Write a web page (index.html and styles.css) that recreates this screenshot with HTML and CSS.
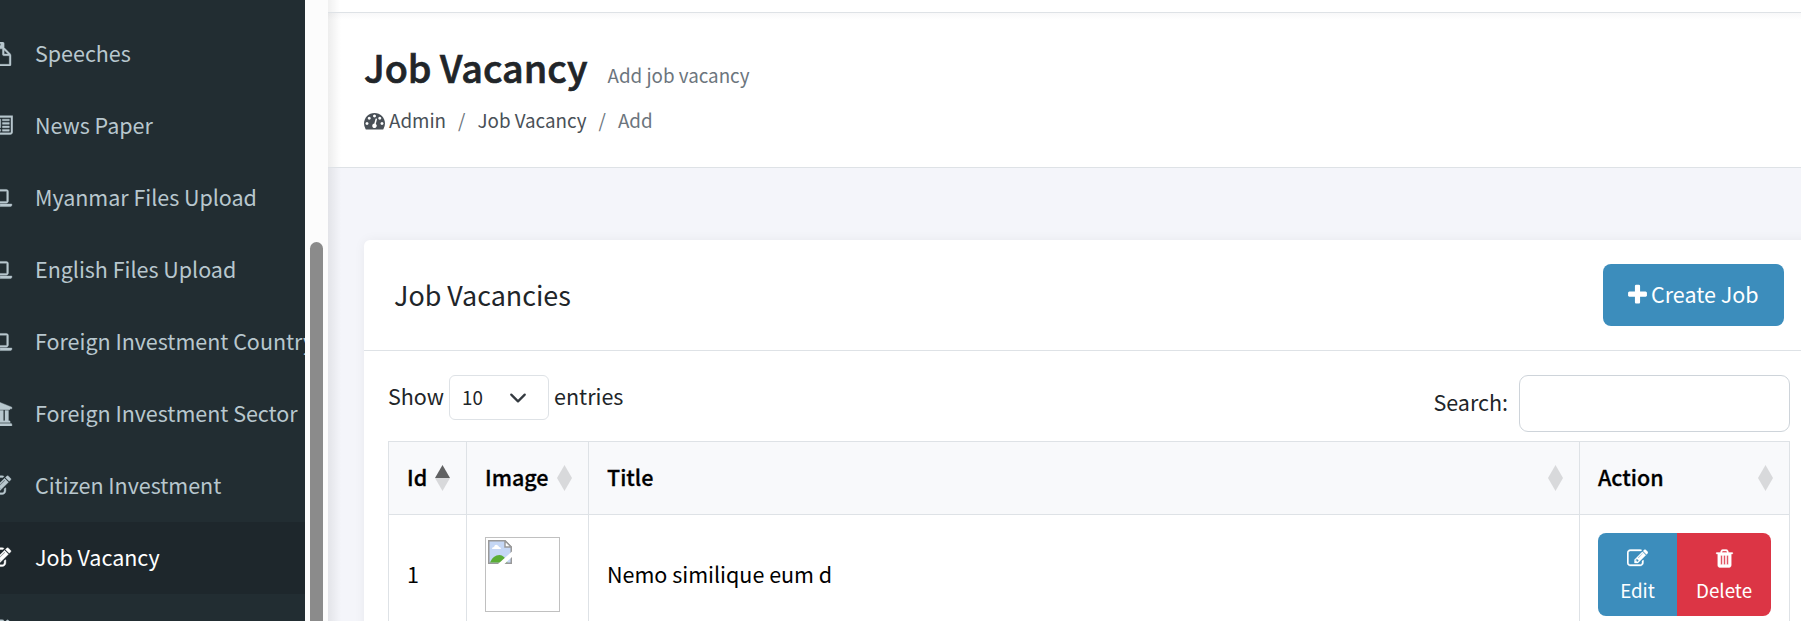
FILE: index.html
```html
<!DOCTYPE html>
<html lang="en">
<head>
    <meta charset="UTF-8">
    <meta name="viewport" content="width=device-width, initial-scale=1.0">
    <title>Job Vacancy</title>
    <link rel="stylesheet" href="styles.css">
</head>
<body>
    <!-- icon sprite -->
    <svg class="sprite">
        <symbol id="i-paste" viewBox="0 0 1792 1792"><path d="M768 1664h896v-640h-416q-40 0-68-28t-28-68v-416h-384v1152zm256-1440v-64q0-13-9.500-22.500t-22.500-9.500h-704q-13 0-22.500 9.500t-9.500 22.500v64q0 13 9.500 22.500t22.500 9.500h704q13 0 22.500-9.500t9.500-22.500zm256 672h299l-299-299v299zm512 128v672q0 40-28 68t-68 28h-960q-40 0-68-28t-28-68v-160h-544q-40 0-68-28t-28-68v-1344q0-40 28-68t68-28h1088q40 0 68 28t28 68v328q21 13 36 28l408 408q28 28 48 76t20 88z"/></symbol>
        <symbol id="i-news" viewBox="0 0 2048 1792"><path d="M1024 512h-384v384h384v-384zm128 640v128h-640v-128h640zm0-768v640h-640v-640h640zm640 768v128h-512v-128h512zm0-256v128h-512v-128h512zm0-256v128h-512v-128h512zm0-256v128h-512v-128h512zm-1536 960v-960h-128v960q0 26 19 45t45 19 45-19 19-45zm1664 0v-1088h-1536v1088q0 33-11 64h1483q26 0 45-19t19-45zm128-1216v1216q0 80-56 136t-136 56h-1664q-80 0-136-56t-56-136v-1088h256v-128h1792z"/></symbol>
        <symbol id="i-laptop" viewBox="0 0 1920 1792"><path d="M416 1280q-66 0-113-47t-47-113v-704q0-66 47-113t113-47h1088q66 0 113 47t47 113v704q0 66-47 113t-113 47h-1088zm-32-864v704q0 13 9.500 22.500t22.500 9.500h1088q13 0 22.500-9.500t9.500-22.500v-704q0-13-9.500-22.500t-22.500-9.500h-1088q-13 0-22.500 9.500t-9.500 22.500zm1376 928h160v96q0 40-47 68t-113 28h-1600q-66 0-113-28t-47-68v-96h1760zm-720 96q16 0 16-16t-16-16h-160q-16 0-16 16t16 16h160z"/></symbol>
        <symbol id="i-bank" viewBox="0 0 1920 1792"><path d="M960 0l960 384v128h-128q0 26-20.500 45t-48.500 19h-1526q-28 0-48.500-19t-20.500-45h-128v-128zm-704 640h256v768h128v-768h256v768h128v-768h256v768h128v-768h256v768h59q28 0 48.500 19t20.500 45v64h-1664v-64q0-26 20.500-45t48.500-19h59v-768zm1595 960q28 0 48.500 19t20.500 45v128h-1920v-128q0-26 20.500-45t48.500-19h1782z"/></symbol>
        <symbol id="i-edit" viewBox="0 0 1792 1792"><path d="M888 1184l116-116-152-152-116 116v56h96v96h56zm440-720q-16-16-33 1l-350 350q-17 17-1 33t33-1l350-350q17-17 1-33zm80 594v190q0 119-84.500 203.500t-203.500 84.500h-832q-119 0-203.500-84.500t-84.500-203.500v-832q0-119 84.500-203.500t203.500-84.500h832q63 0 117 25 15 7 18 23 3 17-9 29l-49 49q-14 14-32 8-23-6-45-6h-832q-66 0-113 47t-47 113v832q0 66 47 113t113 47h832q66 0 113-47t47-113v-126q0-13 9-22l64-64q15-15 35-7t20 29zm-96-738l288 288-672 672h-288v-288zm444 132l-92 92-288-288 92-92q28-28 68-28t68 28l152 152q28 28 28 68t-28 68z"/></symbol>
        <symbol id="i-trash" viewBox="0 0 1792 1792"><path d="M704 1376v-704q0-14-9-23t-23-9h-64q-14 0-23 9t-9 23v704q0 14 9 23t23 9h64q14 0 23-9t9-23zm256 0v-704q0-14-9-23t-23-9h-64q-14 0-23 9t-9 23v704q0 14 9 23t23 9h64q14 0 23-9t9-23zm256 0v-704q0-14-9-23t-23-9h-64q-14 0-23 9t-9 23v704q0 14 9 23t23 9h64q14 0 23-9t9-23zm-544-992h448l-48-117q-7-9-17-11h-317q-10 2-17 11zm928 32v64q0 14-9 23t-23 9h-96v948q0 83-47 143.500t-113 60.500h-832q-66 0-113-58.500t-47-141.500v-952h-96q-14 0-23-9t-9-23v-64q0-14 9-23t23-9h309l70-167q15-37 54-63t79-26h320q40 0 79 26t54 63l70 167h309q14 0 23 9t9 23z"/></symbol>
        <symbol id="i-plus" viewBox="192 0 1408 1792"><path d="M1600 736v192q0 40-28 68t-68 28h-416v416q0 40-28 68t-68 28h-192q-40 0-68-28t-28-68v-416h-416q-40 0-68-28t-28-68v-192q0-40 28-68t68-28h416v-416q0-40 28-68t68-28h192q40 0 68 28t28 68v416h416q40 0 68 28t28 68z"/></symbol>
        <symbol id="i-dash" viewBox="0 0 1792 1792"><path d="M384 1152q0-53-37.500-90.500t-90.500-37.500-90.500 37.500-37.500 90.500 37.500 90.500 90.500 37.500 90.500-37.500 37.500-90.500zm192-448q0-53-37.500-90.500t-90.500-37.500-90.500 37.500-37.500 90.500 37.500 90.500 90.500 37.500 90.500-37.500 37.500-90.500zm428 481l101-382q6-26-7.500-48.500t-38.500-29.500-48 6.500-30 39.500l-101 382q-60 5-107 43.500t-63 98.500q-20 77 20 146t117 89 146-20 89-117q16-60-6-117t-72-91zm660-33q0-53-37.500-90.500t-90.500-37.500-90.500 37.500-37.500 90.500 37.500 90.500 90.500 37.500 90.500-37.500 37.500-90.500zm-640-640q0-53-37.500-90.500t-90.500-37.500-90.500 37.500-37.500 90.500 37.500 90.500 90.500 37.500 90.500-37.500 37.500-90.500zm448 192q0-53-37.500-90.500t-90.500-37.500-90.500 37.500-37.500 90.500 37.500 90.500 90.500 37.500 90.500-37.500 37.500-90.500zm320 448q0 261-141 483-19 29-54 29h-1402q-35 0-54-29-141-221-141-483 0-182 71-348t191-286 286-191 348-71 348 71 286 191 191 286 71 348z"/></symbol>
    </svg>

    <div class="wrapper">
        <aside class="sidebar">
            <ul class="menu">
                <li><svg class="menu-icon"><use href="#i-paste"/></svg><span>Speeches</span></li>
                <li><svg class="menu-icon"><use href="#i-news"/></svg><span>News Paper</span></li>
                <li><svg class="menu-icon"><use href="#i-laptop"/></svg><span>Myanmar Files Upload</span></li>
                <li><svg class="menu-icon"><use href="#i-laptop"/></svg><span>English Files Upload</span></li>
                <li><svg class="menu-icon"><use href="#i-laptop"/></svg><span>Foreign Investment Country</span></li>
                <li><svg class="menu-icon"><use href="#i-bank"/></svg><span>Foreign Investment Sector</span></li>
                <li><svg class="menu-icon"><use href="#i-edit"/></svg><span>Citizen Investment</span></li>
                <li class="active"><svg class="menu-icon"><use href="#i-edit"/></svg><span>Job Vacancy</span></li>
                <li><svg class="menu-icon"><use href="#i-edit"/></svg></li>
            </ul>
        </aside>
        <div class="scrollbar"><div class="thumb"></div></div>

        <main class="content">
            <div class="navbar"></div>
            <header class="page-header">
                <div class="heading">
                    <h1>Job Vacancy</h1>
                    <small>Add job vacancy</small>
                </div>
                <nav class="breadcrumb">
                    <svg class="dash-icon"><use href="#i-dash"/></svg>
                    <a>Admin</a>
                    <span class="sep">/</span>
                    <a>Job Vacancy</a>
                    <span class="sep">/</span>
                    <span>Add</span>
                </nav>
            </header>

            <section class="card">
                <div class="card-header">
                    <h2>Job Vacancies</h2>
                    <button class="btn-create"><svg><use href="#i-plus"/></svg><span>Create Job</span></button>
                </div>
                <div class="card-body">
                    <div class="controls">
                        <div class="length">
                            <span>Show</span>
                            <div class="select"><span>10</span>
                                <svg viewBox="0 0 16 16"><path d="m2 5 6 6 6-6"/></svg>
                            </div>
                            <span>entries</span>
                        </div>
                        <label class="search"><span>Search:</span><input type="text"></label>
                    </div>
                    <table>
                        <colgroup><col class="c-id"><col class="c-image"><col><col class="c-action"></colgroup>
                        <thead>
                            <tr>
                                <th><div class="th"><span>Id</span><svg class="sort" viewBox="0 0 15 26"><path class="up" d="M0 13 7.500 0 15 13z"/><path d="M0 13h15L7.500 26z"/></svg></div></th>
                                <th><div class="th"><span>Image</span><svg class="sort" viewBox="0 0 15 26"><path d="M0 13 7.500 0 15 13 7.500 26z"/></svg></div></th>
                                <th><div class="th"><span>Title</span><svg class="sort" viewBox="0 0 15 26"><path d="M0 13 7.500 0 15 13 7.500 26z"/></svg></div></th>
                                <th><div class="th"><span>Action</span><svg class="sort" viewBox="0 0 15 26"><path d="M0 13 7.500 0 15 13 7.500 26z"/></svg></div></th>
                            </tr>
                        </thead>
                        <tbody>
                            <tr>
                                <td>1</td>
                                <td>
                                    <div class="thumb-img">
                                        <svg viewBox="0 0 24 24">
                                            <path d="M.75.750H17L23.250 7V23.250H.75z" fill="#c5d7f5" stroke="#999" stroke-width="1.500"/>
                                            <path d="M4 9q0-2 2-2 1-3 3-2 2 1 2 2 2 0 2 2z" fill="#fff"/>
                                            <path d="M2 22.500Q5 15 11.500 15q5 0 8 7.500z" fill="#5aad35"/>
                                            <path d="M17 .75V7h6.250z" fill="#fff" stroke="#999" stroke-width="1.500"/>
                                            <path d="M10 24 24 11.500V17l-7.500 7z" fill="#fff"/>
                                        </svg>
                                    </div>
                                </td>
                                <td>Nemo similique eum d</td>
                                <td>
                                    <div class="btn-group">
                                        <button class="btn-edit"><svg><use href="#i-edit"/></svg>Edit</button>
                                        <button class="btn-delete"><svg><use href="#i-trash"/></svg>Delete</button>
                                    </div>
                                </td>
                            </tr>
                        </tbody>
                    </table>
                </div>
            </section>
        </main>
    </div>
</body>
</html>
```
FILE: styles.css
```css
* {
    box-sizing: border-box;
}

body {
    margin: 0;
    font-family: "Noto Sans CJK SC", "Noto Sans", sans-serif;
    font-size: 21.5px;
    line-height: 36px;
    color: #212529;
    background: #f4f5fa;
    height: 621px;
    overflow: hidden;
}

h1, h2 {
    margin: 0;
}

svg {
    fill: currentColor;
    flex-shrink: 0;
}

button {
    border: 0;
    color: #fff;
    font-family: inherit;
}

.sprite {
    display: none;
}

.wrapper {
    display: flex;
    height: 621px;
}

/* Sidebar */
.sidebar {
    width: 305px;
    flex-shrink: 0;
    background: #222d32;
    color: #b8c7ce;
    overflow: hidden;
}

.menu {
    list-style: none;
    margin: 0;
    padding: 18px 0 0;
}

.menu li {
    display: flex;
    align-items: center;
    height: 72px;
    white-space: nowrap;
}

.menu span {
    padding-bottom: 2px;
    letter-spacing: -0.02px;
}

.menu li.active {
    background: #1e272c;
    color: #fff;
}

.menu-icon {
    width: 28px;
    height: 24px;
    margin-left: -15px;
    margin-right: 22px;
    stroke: currentColor;
    stroke-width: 30;
}

.scrollbar {
    width: 23px;
    flex-shrink: 0;
    padding: 242px 5px 0;
    background: #fcfcfc;
}

.thumb {
    height: 400px;
    border-radius: 7px;
    background: #8b8b8b;
}

/* Content */
.content {
    flex: 1;
    min-width: 0;
    overflow: hidden;
    background: linear-gradient(to right, rgba(0, 0, 0, 0.07), rgba(0, 0, 0, 0) 13px) #f4f5fa;
}

.navbar {
    height: 13px;
    background: linear-gradient(to right, rgba(0, 0, 0, 0.06), rgba(0, 0, 0, 0) 12px) #fff;
    border-bottom: 1px solid #dee2e6;
}

.page-header {
    height: 155px;
    padding: 26px 36px 0;
    background: linear-gradient(to right, rgba(0, 0, 0, 0.07), rgba(0, 0, 0, 0) 13px), linear-gradient(#f8f8f9, #fff 7px);
    border-bottom: 1px solid #dee2e6;
}

.heading {
    display: flex;
    align-items: baseline;
    gap: 20px;
    height: 61px;
    line-height: 56px;
}

h1 {
    font-size: 37.7px;
    font-weight: 500;
    -webkit-text-stroke: 0.7px currentColor;
}

small {
    font-size: 18.8px;
    color: #6c757d;
}

.breadcrumb {
    display: flex;
    align-items: center;
    height: 40px;
    font-size: 18.8px;
    color: #6c757d;
}

.breadcrumb a {
    color: #495057;
}

.breadcrumb .sep {
    margin: 0 12px;
}

.dash-icon {
    width: 21px;
    height: 21px;
    margin-right: 4px;
    color: #495057;
}

.card {
    width: 1456px;
    height: 600px;
    margin: 72px 0 0 36px;
    background: #fff;
    border-radius: 6px;
    box-shadow: 0 0 12px rgba(0, 0, 0, 0.05);
}

.card-header {
    display: flex;
    justify-content: space-between;
    align-items: center;
    height: 111px;
    padding: 0 36px 0 30px;
    border-bottom: 1px solid #dee2e6;
}

h2 {
    font-size: 26.9px;
    font-weight: 400;
}

.btn-create {
    display: flex;
    align-items: center;
    width: 181px;
    height: 62px;
    padding: 0 0 0 25px;
    border-radius: 8px;
    background: #3c8dbc;
    font-size: 21.5px;
}

.btn-create svg {
    width: 19px;
    height: 24px;
    margin-right: 4px;
    margin-bottom: 1px;
}

.btn-create span,
.length span,
.search span,
.th span {
    padding-bottom: 3px;
}

.card-body {
    padding: 24px 30px 0 24px;
}

.controls {
    display: flex;
    justify-content: space-between;
    height: 66px;
}

.length {
    display: flex;
    align-items: center;
    gap: 5px;
    height: 45px;
}

.select {
    display: flex;
    align-items: center;
    justify-content: space-between;
    width: 100px;
    height: 45px;
    padding: 0 21px 0 12px;
    border: 1px solid #dee2e6;
    border-radius: 6px;
    font-size: 18.8px;
}

.length .select span {
    padding-bottom: 2px;
}

.select svg {
    width: 18px;
    height: 18px;
    fill: none;
    stroke: #343a40;
    stroke-width: 2;
    stroke-linecap: round;
    stroke-linejoin: round;
}

.search {
    display: flex;
    align-items: center;
    gap: 11px;
    height: 57px;
}

.search input {
    width: 271px;
    height: 57px;
    border: 1px solid #ced4da;
    border-radius: 9px;
    background: #fff;
}

/* Table */
table {
    width: 1402px;
    table-layout: fixed;
    border-collapse: collapse;
    color: #000;
}

.c-id {
    width: 78px;
}

.c-image {
    width: 122px;
}

.c-action {
    width: 210px;
}

th, td {
    padding: 0 18px;
    border: 1px solid #dee2e6;
    text-align: left;
}

th {
    height: 73px;
    padding-right: 16px;
    background: #f8f9fb;
    font-weight: 500;
    -webkit-text-stroke: 0.3px currentColor;
}

td {
    height: 119px;
}

.th {
    display: flex;
    align-items: center;
    justify-content: space-between;
}

.sort {
    width: 15px;
    height: 26px;
    fill: #d8d9db;
}

.sort .up {
    fill: #606162;
}

.thumb-img {
    width: 75px;
    height: 75px;
    padding: 2px;
    border: 1px solid #c0c0c0;
}

.thumb-img svg {
    display: block;
    width: 24px;
    height: 24px;
}

.btn-group {
    display: flex;
    width: 173px;
    height: 83px;
    border-radius: 8px;
    overflow: hidden;
}

.btn-group button {
    display: flex;
    flex-direction: column;
    align-items: center;
    gap: 4px;
    padding: 15px 0 0;
    font-size: 18.8px;
    line-height: 34px;
}

.btn-group svg {
    width: 21px;
    height: 21px;
    stroke: currentColor;
    stroke-width: 30;
}

.btn-edit {
    width: 79px;
    background: #3c8dbc;
}

.btn-delete {
    width: 94px;
    background: #dc3545;
}
```
